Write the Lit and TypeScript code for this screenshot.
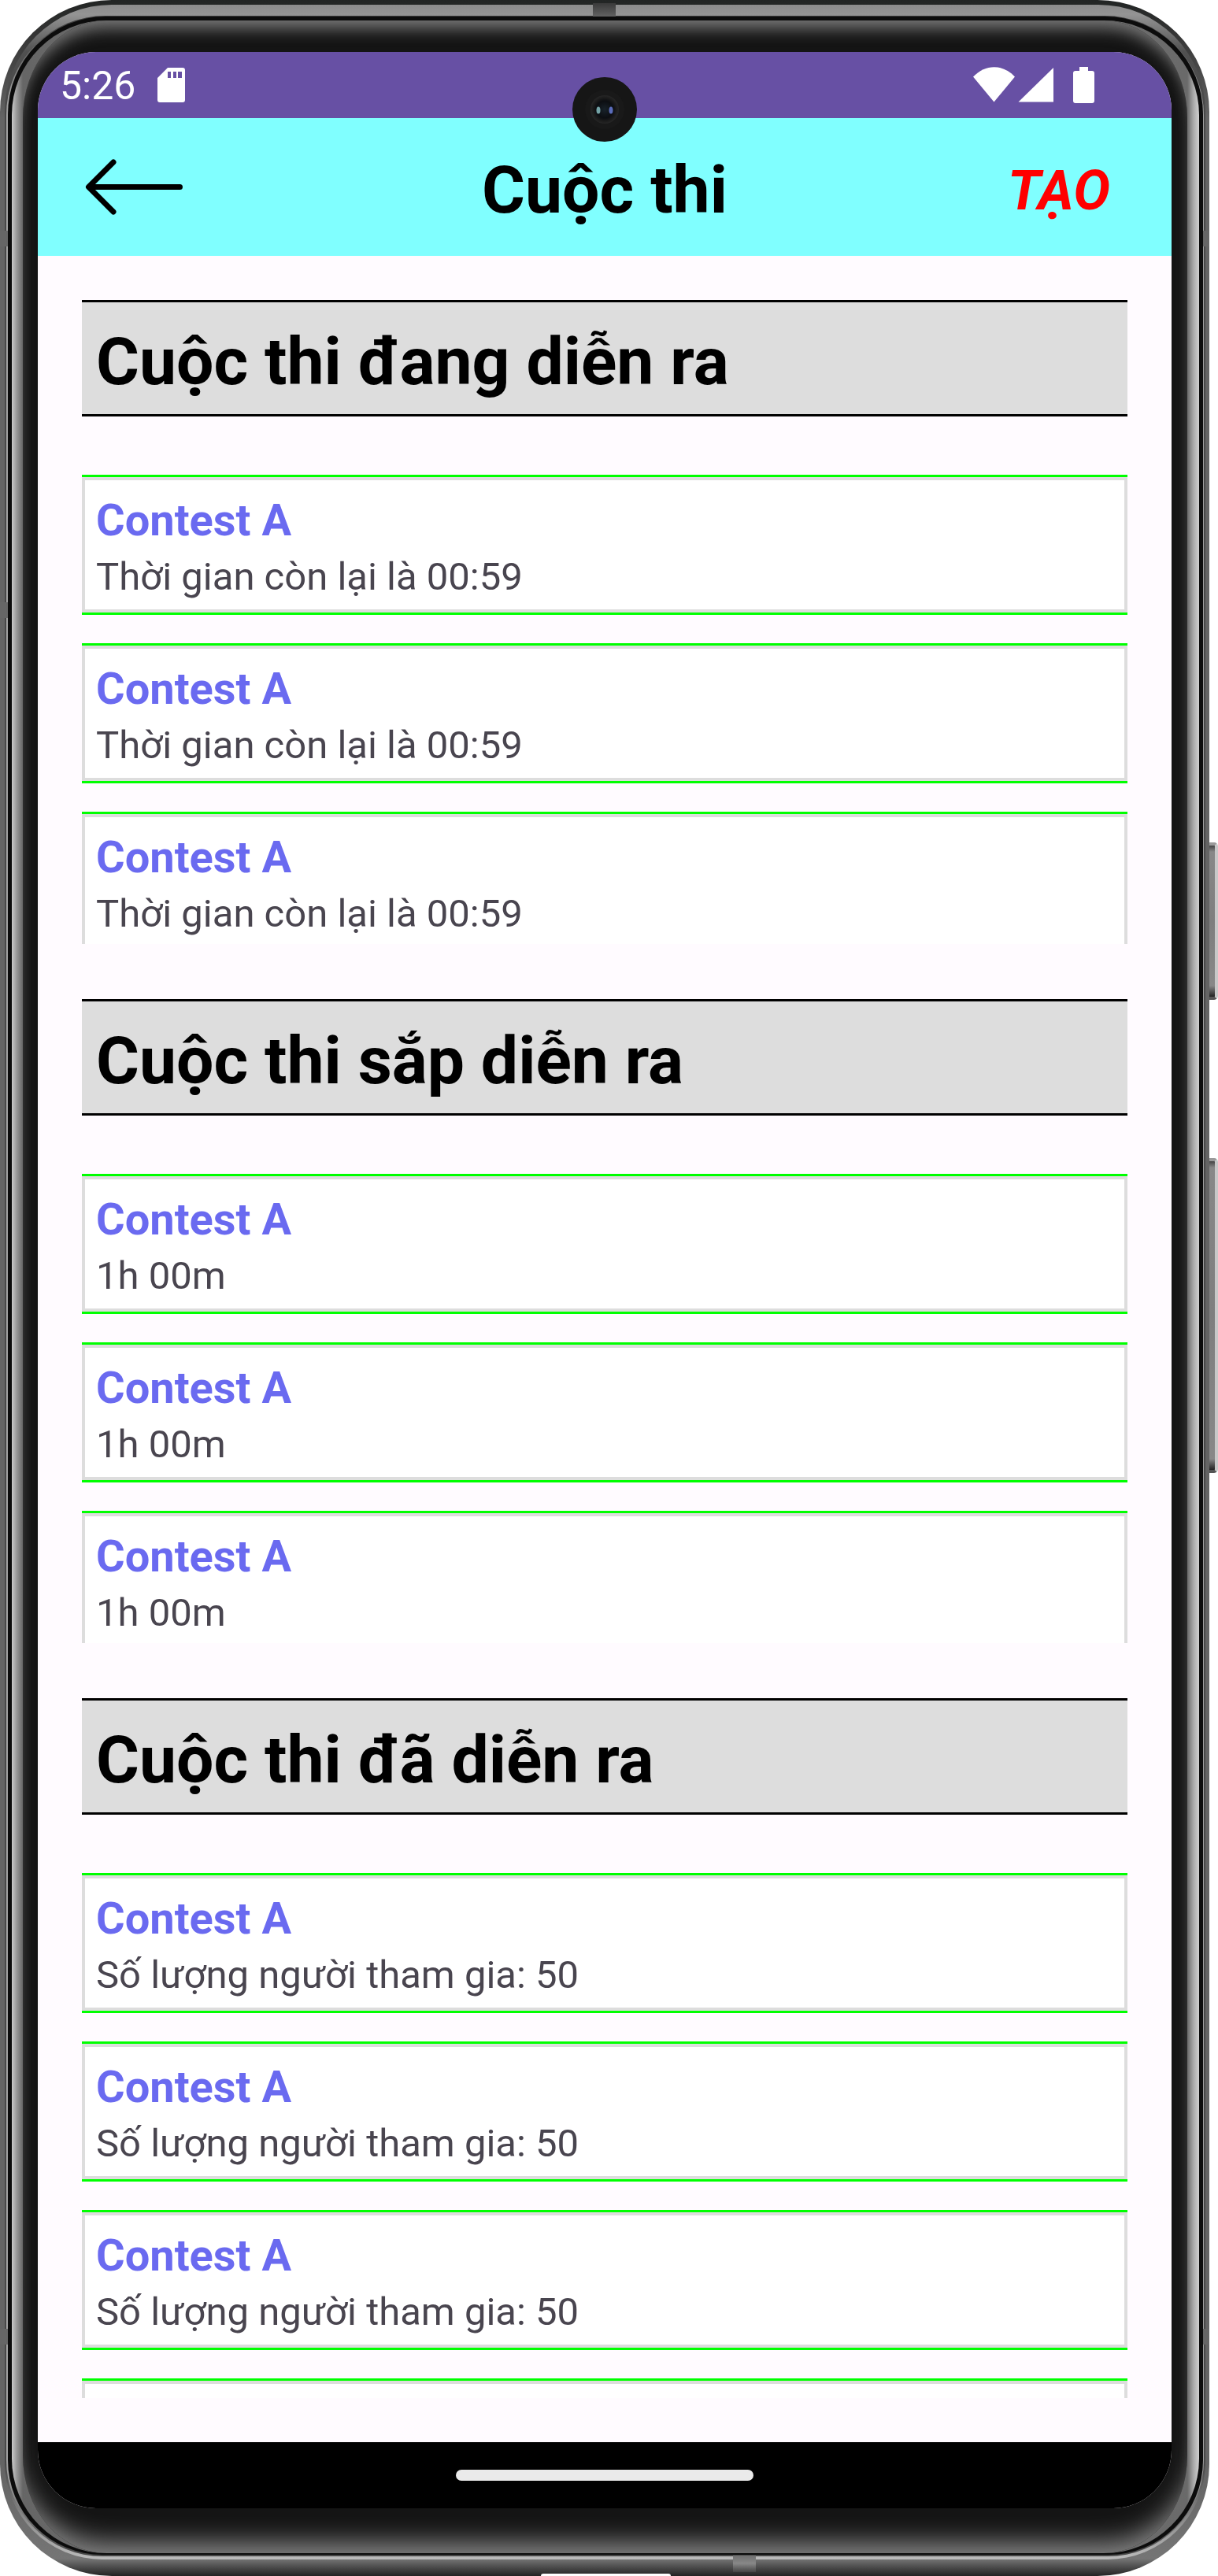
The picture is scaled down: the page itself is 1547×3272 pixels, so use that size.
import { LitElement, html, css, svg } from "lit";
import { customElement, property } from "lit/decorators.js";

interface Contest {
  name: string;
  detail: string;
}

interface Section {
  title: string;
  contests: Contest[];
  last?: boolean;
}

const repeat = (count: number, detail: string): Contest[] =>
  Array.from({ length: count }, () => ({ name: "Contest A", detail }));

const SECTIONS: Section[] = [
  { title: "Cuộc thi đang diễn ra", contests: repeat(3, "Thời gian còn lại là 00:59") },
  { title: "Cuộc thi sắp diễn ra", contests: repeat(3, "1h 00m") },
  { title: "Cuộc thi đã diễn ra", contests: repeat(3, "Số lượng người tham gia: 50"), last: true },
];

/** A titled group of contests whose list is cut off at its viewport. */
@customElement("contest-section")
export class ContestSection extends LitElement {
  @property({ attribute: false }) section!: Section;

  static styles = css`
    :host {
      display: block;
    }
    .title {
      margin: 0;
      padding: 10px 18px 0;
      border: solid #000;
      border-width: 3px 0;
      background: #ddd;
      color: #000;
      font-size: 84px;
      font-weight: 700;
      line-height: 132px;
    }
    .list {
      display: flex;
      flex-direction: column;
      gap: 36px;
      height: 596px;
      margin: 74px 0 0;
      padding: 0;
      overflow: hidden;
      list-style: none;
    }
    .list.last {
      height: 667px;
    }
    .item {
      flex: none;
      border: solid #0f0;
      border-width: 3px 0;
    }
    .card {
      padding: 18px 14px 12px;
      border: 4px solid #ddd;
      background: #fff;
    }
    .name {
      margin: 0;
      color: #6a6af0;
      font-size: 56px;
      font-weight: 700;
      line-height: 66px;
    }
    .detail {
      margin: 10px 0 0;
      color: #49454f;
      font-size: 49px;
      line-height: 58px;
    }
  `;

  render() {
    const { title, contests, last } = this.section;
    return html`
      <h2 class="title">${title}</h2>
      <ul class="list ${last ? "last" : ""}">
        ${contests.map(
          (c) => html`
            <li class="item">
              <div class="card">
                <h3 class="name">${c.name}</h3>
                <p class="detail">${c.detail}</p>
              </div>
            </li>
          `,
        )}
        ${last ? html`<li class="item" aria-hidden="true"><div class="card"></div></li>` : ""}
      </ul>
    `;
  }
}

const sdCard = svg`<path fill="#fff" fill-rule="evenodd" d="M13 0H32Q35 0 35 3V41Q35 44 32 44H3Q0 44 0 41V13ZM13 5V13H17V5ZM20 5V13H24V5ZM26 5V13H31V5Z"/>`;

@customElement("app-root")
export class AppRoot extends LitElement {
  static styles = css`
    :host {
      display: block;
      background: #fff;
      font-family: Roboto, "Noto Sans", sans-serif;
    }
    .phone {
      position: relative;
      box-sizing: border-box;
      margin-right: 11px;
      padding: 66px 48px 86px;
    }
    .layer {
      position: absolute;
    }
    .rail {
      inset: 0;
      border-radius: 142px;
      background: linear-gradient(#222524, #333 40px, #646464 150px, #646464 calc(100% - 140px), #757575 calc(100% - 22px), #222 100%);
    }
    .band {
      inset: 6px 5px 21px 6px;
      border-radius: 136px 136px 124px 124px;
      background: linear-gradient(#8c8c8c, #949494 12px, #505050 60px, #484848 140px, #484848 calc(100% - 120px), #bbb 100%);
    }
    .stripe {
      inset: 20px 7px 25px 8px;
      border-radius: 126px 126px 122px 122px;
      background: linear-gradient(#3a3a3a, #a0a0a0 100px, #a0a0a0 calc(100% - 100px), #444 100%);
    }
    .seam {
      inset: 21px 8px 27px 10px;
      border-radius: 124px 124px 120px 120px;
      background: #0c0c0c;
    }
    .glass {
      inset: 26px 13px 29px 15px;
      border-radius: 120px;
      background: linear-gradient(to right, #cacaca, #999 6px, #666 14px, #777 50%, #6a6a6a calc(100% - 15px), #aaa calc(100% - 7px), #d0d0d0 100%);
    }
    .bezel {
      inset: 26px 28px 29px 29px;
      border-radius: 106px / 124px;
      background: #141414;
      box-shadow:
        inset 0 22px 20px -12px #787878,
        inset 0 -30px 30px -15px #808080;
    }
    .joint {
      background: #666;
    }
    .joint-top {
      top: 4px;
      left: 753px;
      width: 29px;
      height: 17px;
      background: linear-gradient(#3a3a3a, #626262);
    }
    .joint-bottom {
      bottom: 5px;
      left: 931px;
      width: 29px;
      height: 21px;
      background: linear-gradient(#707070, #888 10px, #444);
    }
    .joint-left {
      left: 0;
      width: 13px;
      height: 20px;
    }
    .joint-right {
      right: 0;
      width: 11px;
      height: 20px;
    }
    .at-upper {
      top: 293px;
    }
    .at-middle {
      top: 765px;
    }
    .at-lower {
      bottom: 294px;
    }
    .port {
      bottom: 0;
      left: 687px;
      width: 165px;
      height: 3px;
      border-radius: 12px 12px 0 0;
      background: #fff;
    }
    .side-key {
      right: -11px;
      box-sizing: border-box;
      width: 13px;
      border: solid;
      border-color: #9a9a9a #c8c8c8 #555 #555;
      border-width: 4px 4px 4px 2px;
      border-radius: 2px 5px 5px 2px;
      background: linear-gradient(#444, #888 8px, #7e7e7e 50%, #888 calc(100% - 14px), #222);
    }
    .power {
      top: 1070px;
      height: 200px;
    }
    .volume {
      top: 1471px;
      height: 400px;
    }
    .screen {
      position: relative;
      display: flex;
      flex-direction: column;
      overflow: hidden;
      border-radius: 74px;
      background: #fffbff;
    }
    .status {
      display: flex;
      align-items: center;
      justify-content: space-between;
      height: 84px;
      padding: 0 98px 0 28px;
      background: #6750a4;
      color: #fff;
    }
    .status-group {
      display: flex;
      align-items: center;
      gap: 28px;
    }
    .time {
      padding-top: 2px;
      font-size: 50px;
      line-height: 58px;
    }
    .status svg {
      display: block;
    }
    .camera {
      position: absolute;
      top: 32px;
      left: 50%;
      width: 82px;
      height: 82px;
      margin-left: -41px;
    }
    .bar {
      display: grid;
      grid-template-columns: 1fr auto 1fr;
      align-items: center;
      height: 175px;
      padding: 0 60px;
      background: #80ffff;
    }
    .back,
    .create {
      padding: 0;
      border: 0;
      background: none;
      font-family: inherit;
    }
    .back {
      justify-self: start;
      line-height: 0;
    }
    .heading {
      margin: 0;
      padding-top: 8px;
      color: #000;
      font-size: 84px;
      font-weight: 700;
      line-height: 98px;
    }
    .create {
      justify-self: end;
      padding: 8px 18px 0 0;
      color: #f00;
      font-size: 70px;
      font-style: italic;
      font-weight: 700;
      line-height: 82px;
    }
    .content {
      display: flex;
      flex-direction: column;
      gap: 70px;
      padding: 56px;
    }
    .nav {
      display: flex;
      align-items: center;
      justify-content: center;
      height: 84px;
      background: #000;
    }
    .pill {
      width: 378px;
      height: 14px;
      border-radius: 7px;
      background: #eaeaea;
    }
  `;

  render() {
    return html`
      <div class="phone">
        <div class="layer side-key power"></div>
        <div class="layer side-key volume"></div>
        <div class="layer rail"></div>
        <div class="layer band"></div>
        <div class="layer stripe"></div>
        <div class="layer joint joint-top"></div>
        <div class="layer joint joint-bottom"></div>
        <div class="layer joint joint-left at-upper"></div>
        <div class="layer joint joint-left at-middle"></div>
        <div class="layer joint joint-left at-lower"></div>
        <div class="layer joint joint-right at-upper"></div>
        <div class="layer joint joint-right at-lower"></div>
        <div class="layer seam"></div>
        <div class="layer glass"></div>
        <div class="layer bezel"></div>
        <div class="layer port"></div>
        <div class="screen">
          <div class="status">
            <div class="status-group">
              <span class="time">5:26</span>
              <svg width="35" height="44" viewBox="0 0 35 44" aria-hidden="true">${sdCard}</svg>
            </div>
            <svg width="154" height="46" viewBox="0 0 154 46" fill="#fff" aria-hidden="true">
              <path d="M0 12.500C16-4 37-4 53 12.500L26.500 44.500Z" />
              <path d="M102 1V44.500H57.500Z" />
              <path d="M135 0H146V5H151Q154 5 154 8V43Q154 46 151 46H130Q127 46 127 43V8Q127 5 130 5H135Z" />
            </svg>
          </div>
          <header class="bar">
            <button class="back" aria-label="Quay lại">
              <svg width="124" height="72" viewBox="0 0 124 72" fill="none" stroke="#000" stroke-width="7" stroke-linecap="round" stroke-linejoin="round">
                <path d="M120.500 35.500H5M36 4L4.500 35.500L36 67" />
              </svg>
            </button>
            <h1 class="heading">Cuộc thi</h1>
            <button class="create">TẠO</button>
          </header>
          <main class="content">
            ${SECTIONS.map((s) => html`<contest-section .section=${s}></contest-section>`)}
          </main>
          <div class="nav"><div class="pill"></div></div>
          <svg class="camera" viewBox="0 0 82 82" aria-hidden="true">
            <defs>
              <radialGradient id="lens">
                <stop offset="0" stop-color="#18222a" />
                <stop offset="0.600" stop-color="#0c0e12" />
                <stop offset="0.800" stop-color="#1a1a1a" />
                <stop offset="1" stop-color="#262626" />
              </radialGradient>
            </defs>
            <circle cx="41" cy="41" r="41" fill="#161616" />
            <circle cx="41" cy="41" r="25" fill="#191919" />
            <circle cx="41" cy="41" r="18" fill="url(#lens)" />
            <ellipse cx="33" cy="42" rx="2.500" ry="4.500" fill="#74a3a6" />
            <ellipse cx="49" cy="42" rx="2.500" ry="4.500" fill="#5b6cba" />
          </svg>
        </div>
      </div>
    `;
  }
}
